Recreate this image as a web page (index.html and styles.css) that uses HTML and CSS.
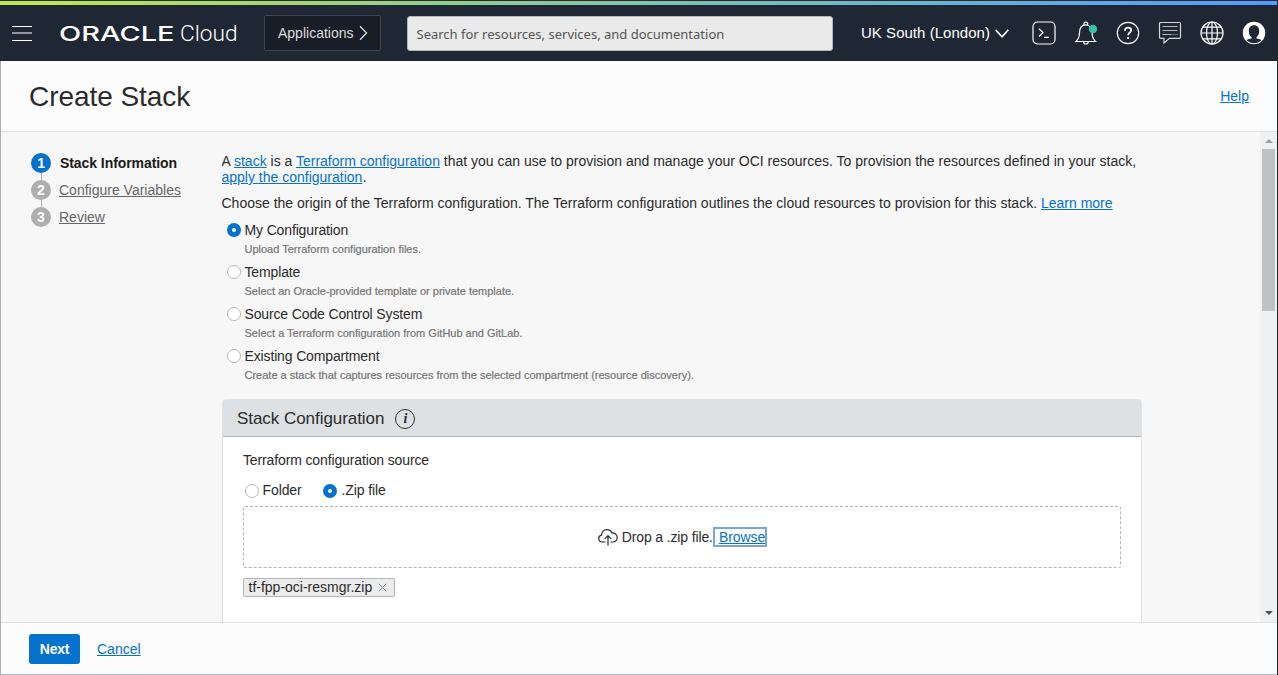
FILE: index.html
```html
<!DOCTYPE html>
<html lang="en">
<head>
<meta charset="utf-8">
<title>Create Stack</title>
<link rel="stylesheet" href="styles.css">
</head>
<body>
<div class="window">
  <div class="accent"></div>
  <header class="topbar">
    <div class="burger"><span></span><span class="mid"></span><span></span></div>
    <svg class="logo" width="180" height="36" viewBox="0 0 180 36">
      <text class="logo-oracle" x="-1" y="26" textLength="115.500" lengthAdjust="spacingAndGlyphs">ORACLE</text>
      <text class="logo-cloud" x="120" y="26" textLength="57.500" lengthAdjust="spacingAndGlyphs">Cloud</text>
    </svg>
    <div class="apps"><span>Applications</span><svg width="9" height="16" viewBox="0 0 9 16"><path d="M1 1.2 7.6 8 1 14.8"/></svg></div>
    <div class="search"><span>Search for resources, services, and documentation</span></div>
    <div class="region"><span>UK South (London)</span><svg width="14" height="9" viewBox="0 0 14 9"><path d="M.7.9 7 7.8 13.3.9"/></svg></div>
    <div class="tools">
      <svg viewBox="0 0 24 24"><rect x="1" y="1" width="22" height="22" rx="4.5"/><path d="M7 7.700l4 3.900-4 3.900M12 16.400h5"/></svg>
      <svg viewBox="0 0 24 24"><path d="M2 20.5h19.5c-2.6-2.6-3.300-4.500-3.300-8 0-5-2-8.700-6.400-8.700S5.400 7.500 5.400 12.500c0 3.500-.8 5.400-3.400 8zM10 3.600a1.900 1.900 0 1 1 3.600 0M9.600 20.700a2.300 2.300 0 0 0 4.600 0"/><circle class="dot" cx="19" cy="8" r="4.200"/></svg>
      <svg viewBox="0 0 24 24"><circle cx="12" cy="12" r="10.700"/><path class="bold" d="M8.900 9.700c0-1.900 1.300-3 3.200-3s3.100 1.100 3.100 2.600c0 2.400-3.100 2.300-3.100 5M12.100 16v2"/></svg>
      <svg viewBox="0 0 24 24"><path class="bubble" d="M2.500 1.500h19a1 1 0 0 1 1 1v13.800a1 1 0 0 1-1 1h-10L6 22v-4.700H2.500a1 1 0 0 1-1-1V2.500a1 1 0 0 1 1-1z"/><path class="dim" d="M4.500 5.500h15M4.500 9.500h15M4.500 13.500h9"/><path class="dim" stroke-dasharray="1 1" d="M14.500 13.500h5"/></svg>
      <svg viewBox="0 0 24 24"><circle cx="12" cy="12" r="11"/><ellipse cx="12" cy="12" rx="5.500" ry="11"/><path d="M12 1v22M1 12h22M2.800 6.200h18.400M2.800 17.800h18.400"/></svg>
      <svg viewBox="0 0 24 24"><circle class="fill" cx="12" cy="12" r="11.200"/><path class="head" d="M12 4.200c-3.200 0-5.200 2.200-5.200 5.500 0 3.100 1.200 5.600 2.900 6.700v.8c-2 .5-3.900 1-5 1.900 1.900 2.100 4.500 3.200 7.300 3.200s5.400-1.100 7.300-3.200c-1.100-.9-3-1.400-5-1.900v-.8c1.700-1.100 2.900-3.600 2.900-6.700 0-3.300-2-5.500-5.200-5.500z"/></svg>
    </div>
  </header>
  <div class="page">
    <div class="titlebar"><h1>Create Stack</h1><a class="help">Help</a></div>
    <div class="body">
      <nav class="steps">
        <div class="step current"><b>1</b><span>Stack Information</span></div>
        <div class="step"><b>2</b><a>Configure Variables</a></div>
        <div class="step"><b>3</b><a>Review</a></div>
      </nav>
      <main class="content">
        <p class="intro">A <a>stack</a> is a <a>Terraform configuration</a> that you can use to provision and manage your OCI resources. To provision the resources defined in your stack,<br><a>apply the configuration</a>.</p>
        <p class="choose">Choose the origin of the Terraform configuration. The Terraform configuration outlines the cloud resources to provision for this stack. <a>Learn more</a></p>
        <div class="option"><i class="radio on"></i><div><div class="name">My Configuration</div><div class="hint">Upload Terraform configuration files.</div></div></div>
        <div class="option"><i class="radio"></i><div><div class="name">Template</div><div class="hint">Select an Oracle-provided template or private template.</div></div></div>
        <div class="option"><i class="radio"></i><div><div class="name">Source Code Control System</div><div class="hint">Select a Terraform configuration from GitHub and GitLab.</div></div></div>
        <div class="option"><i class="radio"></i><div><div class="name">Existing Compartment</div><div class="hint">Create a stack that captures resources from the selected compartment (resource discovery).</div></div></div>
        <section class="card">
          <div class="card-head"><h2>Stack Configuration</h2><span class="info">i</span></div>
          <div class="card-body">
            <div class="label">Terraform configuration source</div>
            <div class="sources"><i class="radio"></i><span class="folder">Folder</span><i class="radio on"></i><span class="zip">.Zip file</span></div>
            <div class="drop">
              <svg width="20" height="17" viewBox="0 0 20 17"><path d="M7.500 13H4.300A3.700 3.700 0 0 1 .7 9.500c0-1.700 1.200-3 2.800-3.400.2-3 2.300-5.400 5.400-5.400 2.300 0 4.200 1.300 5 3.300 2.500-.3 5.300 1.500 5.300 4.600 0 2.600-1.900 4.400-4.300 4.400h-2.400M10 16.500V7M6.800 9.800 10 6.600l3.200 3.200"/></svg>
              <span class="drop-text">Drop a .zip file.</span><span class="browse"><a>Browse</a></span>
            </div>
            <div class="chip"><span>tf-fpp-oci-resmgr.zip</span><svg width="9" height="9" viewBox="0 0 9 9"><path d="M.7.7l7.600 7.600M8.300.7.7 8.300"/></svg></div>
          </div>
        </section>
      </main>
      <div class="scrollbar"><i class="up"></i><i class="thumb"></i><i class="down"></i></div>
    </div>
    <footer class="actions"><button class="next">Next</button><a>Cancel</a></footer>
  </div>
</div>
</body>
</html>
```
FILE: styles.css
```css
* { box-sizing: border-box; }
body { margin: 0; font-family: "Liberation Sans", Arial, sans-serif; font-size: 14px; line-height: 16px; color: #2b2b2b; }
h1, h2, p { margin: 0; font-weight: 400; }
a { color: #0572ce; text-decoration: underline; }
svg { fill: none; flex: none; }
.window { height: 675px; overflow: hidden; display: flex; flex-direction: column; border-top: 1px solid #2d2926; border-right: 1px solid #20252b; }
.accent { height: 4px; flex: none; background: linear-gradient(90deg, #bce94f, #8dcb95 38%, #71b7cc 67%, #519aff); }
.topbar { height: 56px; flex: none; display: flex; align-items: center; background: #1e2733; padding: 0 11px 0 12px; }
.burger { width: 20px; height: 15px; display: flex; flex-direction: column; justify-content: space-between; }
.burger span { height: 1px; background: #fff; }
.burger .mid { height: 2px; background: #91969c; }
.logo { margin-left: 28px; overflow: visible; }
.logo text { fill: #fff; }
.logo-oracle { font: 500 20.500px Inter, sans-serif; }
.logo-cloud { font: 300 22px Roboto, sans-serif; }
.apps { width: 117px; height: 36px; margin-left: 24px; display: flex; align-items: center; gap: 5px; padding-left: 13px; border: 1px solid #3a434e; border-radius: 2px; background: #171e27; color: #dcdcdc; }
.apps svg { stroke: #dcdcdc; stroke-width: 1.300; }
.search { width: 426px; height: 35px; margin-left: 26px; padding: 1px 9px 0 8.500px; border: 1px solid #aeb6be; border-radius: 3px; background: #eaeaea; color: #555; font: 13px/33px "Noto Sans", sans-serif; }
.region { margin-left: 28px; display: flex; align-items: center; gap: 5px; color: #fff; font-size: 15px; }
.region span { letter-spacing: .03px; }
.region svg { stroke: #fff; stroke-width: 1.600; }
.tools { margin-left: auto; display: flex; gap: 18px; }
.tools svg { width: 24px; height: 24px; stroke: #fff; stroke-width: 1.200; }
.tools .bold { stroke-width: 1.700; }
.tools .bubble { stroke: #d4d6d8; }
.tools .dim { stroke: #b4b8bc; }
.tools .dot { fill: #35c3a2; stroke: none; }
.tools .fill { fill: #fff; stroke: none; }
.tools .head { fill: #1e2733; stroke: none; }
.page { flex: 1; min-height: 0; display: flex; flex-direction: column; border-left: 1px solid #aeaeae; border-bottom: 1px solid #b1b9c3; background: #fcfcfc; }
.titlebar { height: 71px; flex: none; display: flex; align-items: center; justify-content: space-between; padding: 0 28px; border-bottom: 1px solid #e2e2e2; }
h1 { font-size: 28px; line-height: 32px; letter-spacing: -.05px; padding-top: 2px; }
.body { flex: 1; min-height: 0; display: flex; background: #f7f7f7; }
.steps { width: 220.500px; flex: none; padding: 21px 0 0 30px; }
.step { display: flex; align-items: center; gap: 8px; height: 20px; margin-bottom: 7px; position: relative; }
.step a { color: #666; }
.step b { width: 20px; height: 20px; border-radius: 50%; background: #aeaeae; color: #fff; text-align: center; line-height: 20px; }
.step.current { font-weight: 700; color: #1a1a1a; gap: 9px; letter-spacing: -.07px; }
.step.current b { background: #0572ce; }
.step:not(:last-child)::after { content: ""; position: absolute; left: 10px; top: 20px; width: 1px; height: 7px; background: #aeaeae; }
.content { width: 1038.500px; flex: none; padding-top: 21px; overflow: hidden; white-space: nowrap; }
.choose { margin: 10px 0; }
.option { display: flex; gap: 3.500px; height: 42px; padding-left: 5.500px; }
.radio { width: 14px; height: 14px; flex: none; margin-top: 2px; border: 1px solid #b4b9c2; border-radius: 50%; background: #fff; }
.radio.on { border: 5px solid #0572ce; }
.name { line-height: 18px; margin-bottom: 3px; letter-spacing: -.14px; }
.hint { font-size: 11px; line-height: 14px; color: #757575; -webkit-text-stroke: .2px #757575; }
.card { width: 920px; margin-top: 10px; margin-left: .5px; height: 300px; background: #fff; border: 1px solid #e0e2e4; border-radius: 4px 4px 0 0; }
.card-head { height: 37px; display: flex; align-items: center; gap: 11px; padding: 2px 0 0 14px; background: #dde1e4; border-bottom: 1px solid #afb8c2; }
h2 { font-size: 17px; line-height: 20px; letter-spacing: -.05px; }
.info { width: 20px; height: 20px; border: 1.500px solid #333; border-radius: 50%; font: italic 700 14px/17px "Liberation Serif", serif; text-align: center; }
.card-body { padding: 15px 20px; letter-spacing: -.13px; }
.sources { display: flex; height: 16px; margin: 14px 0 8px 2px; align-items: center; }
.folder { margin: 0 21.500px 0 3.500px; letter-spacing: -.1px; }
.zip { margin-left: 4.500px; }
.sources .radio { margin-top: 1px; }
.drop { height: 62px; display: flex; align-items: center; justify-content: center; padding-left: 1px; border: 1px dashed #b0b7c0; border-radius: 2px; }
.drop svg { stroke: #2b2b2b; stroke-width: 1.200; }
.drop-text { margin-left: 4px; }
.browse { border: 2px solid #78a5e0; padding: 0 0 0 4px; height: 20px; letter-spacing: -.05px; }
.chip { display: flex; align-items: center; gap: 6px; width: 152px; height: 19px; margin-top: 10px; padding-left: 4.500px; border: 1px solid #b0b7c0; border-radius: 2px; background: #ececec; letter-spacing: 0; }
.chip span { line-height: 15px; padding-bottom: 1px; }
.chip svg { stroke: #888; }
.scrollbar { width: 17px; flex: none; display: flex; flex-direction: column; align-items: center; background: #f0f0f0; }
.up, .down { width: 0; height: 0; border: 4px solid transparent; border-top: 0; border-bottom: 4px solid #9c9c9c; margin: 7px 0 6px; }
.thumb { width: 13px; height: 162px; background: #c1c1c1; }
.down { margin: auto 0 7px; border-bottom: 0; border-top: 4px solid #505050; }
.actions { height: 52px; flex: none; display: flex; align-items: center; gap: 17px; padding-left: 28px; border-top: 1px solid #e0e2e4; }
.next { width: 51px; height: 30px; padding: 0; border: 0; border-radius: 3px; background: #0572ce; color: #fff; font: 700 14px/30px "Liberation Sans", sans-serif; letter-spacing: -.2px; }
```
